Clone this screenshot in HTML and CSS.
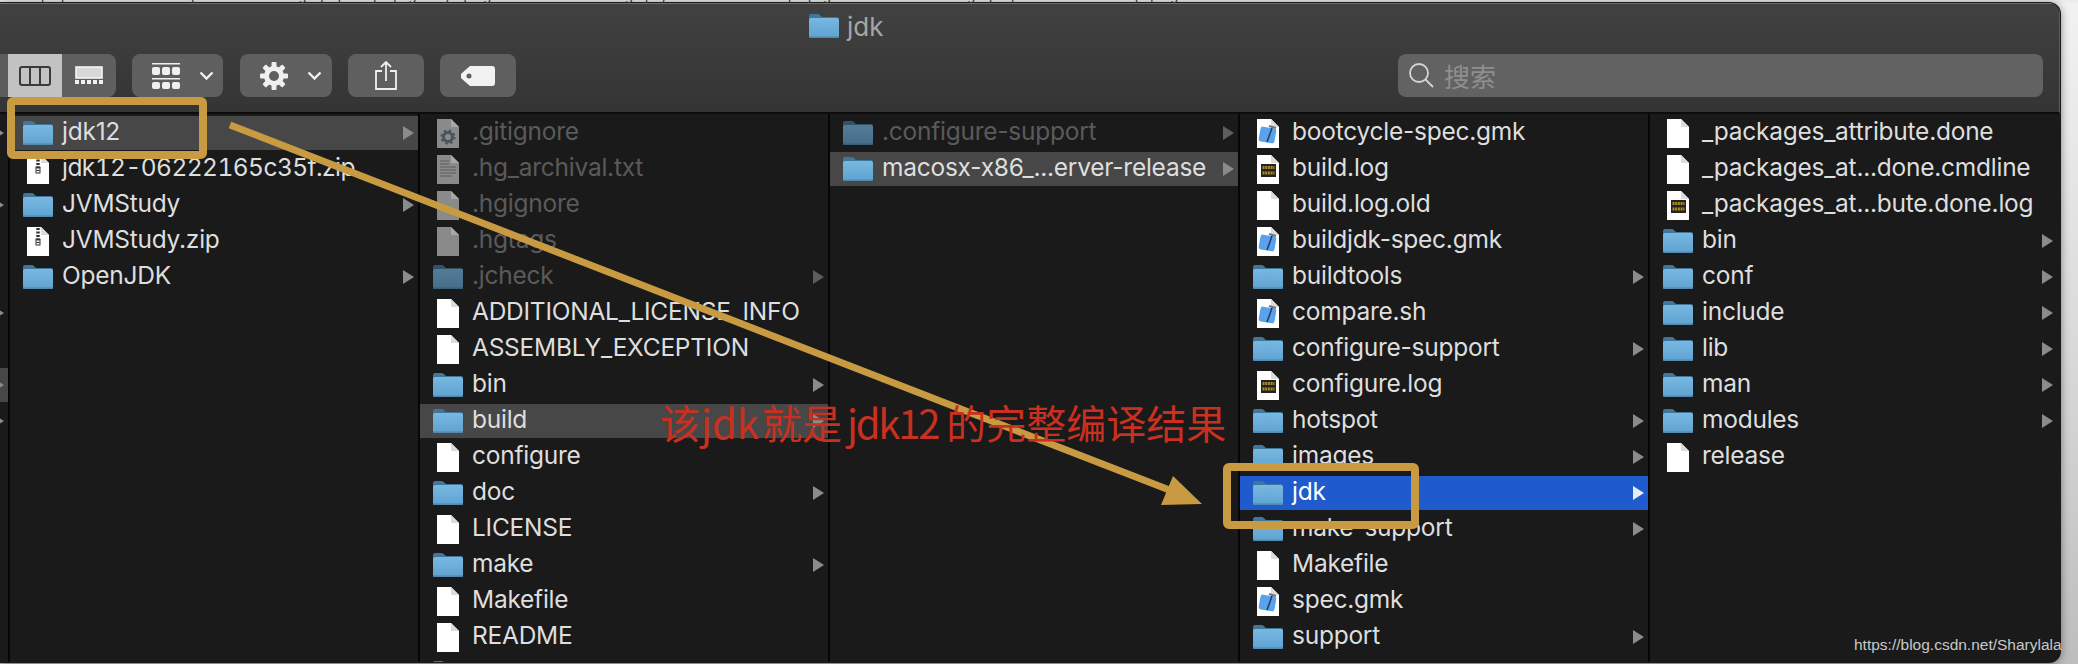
FILE: index.html
```html
<!DOCTYPE html>
<html lang="zh">
<head>
<meta charset="utf-8">
<title>jdk</title>
<link rel="stylesheet" href="styles.css">
</head>
<body>
<svg class="defs" width="0" height="0" aria-hidden="true">
  <defs>
    <linearGradient id="fg" x1="0" y1="0" x2="0" y2="1"><stop offset="0" stop-color="#78b8e2"/><stop offset="1" stop-color="#5fa2d0"/></linearGradient>
    <symbol id="folder" viewBox="0 0 30 24">
      <path d="M0 2a2 2 0 0 1 2-2h7a2 2 0 0 1 1.500.7L13 3h15a2 2 0 0 1 2 2v6H0z" fill="#3f7699"/>
      <path d="M0 6a2 2 0 0 1 2-2h26a2 2 0 0 1 2 2v16a2 2 0 0 1-2 2H2a2 2 0 0 1-2-2z" fill="url(#fg)"/>
      <path d="M0 22.500h30v.5a1 1 0 0 1-1 1H1a1 1 0 0 1-1-1z" fill="#4d89b2"/>
    </symbol>
    <symbol id="file" viewBox="0 0 22 29">
      <path d="M0 0h14l8 8v21H0z" fill="#fff"/>
      <path d="M14 0l8 8h-8z" fill="#dcdcdc"/>
    </symbol>
    <symbol id="zip" viewBox="0 0 22 29">
      <path d="M0 0h14l8 8v21H0z" fill="#fff"/>
      <path d="M14 0l8 8h-8z" fill="#dcdcdc"/>
      <path d="M11 1v15" stroke="#333" stroke-width="3.500" stroke-dasharray="2 1.500"/>
      <rect x="9" y="12" width="4" height="6" fill="none" stroke="#333"/>
    </symbol>
    <symbol id="filedim" viewBox="0 0 22 29">
      <path d="M0 0h14l8 8v21H0z" fill="#8a8a8a"/>
      <path d="M14 0l8 8h-8z" fill="#a8a8a8"/>
    </symbol>
    <symbol id="gearfile" viewBox="0 0 22 29">
      <path d="M0 0h14l8 8v21H0z" fill="#8a8a8a"/>
      <path d="M14 0l8 8h-8z" fill="#a8a8a8"/>
      <circle cx="11" cy="18" r="4.500" fill="none" stroke="#48565c" stroke-width="3"/>
      <circle cx="11" cy="18" r="6.500" fill="none" stroke="#48565c" stroke-width="2" stroke-dasharray="2.500 2.600"/>
    </symbol>
    <symbol id="txtfile" viewBox="0 0 22 29">
      <path d="M0 0h14l8 8v21H0z" fill="#8a8a8a"/>
      <path d="M14 0l8 8h-8z" fill="#a8a8a8"/>
      <path d="M3 6h9M3 9h9M3 12h16M3 15h16M3 18h16M3 21h12" stroke="#5c5c5c" stroke-width="1.200"/>
    </symbol>
    <symbol id="xcode" viewBox="0 0 22 29">
      <path d="M0 0h14l8 8v21H0z" fill="#fff"/>
      <path d="M14 0l8 8h-8z" fill="#dcdcdc"/>
      <rect x="2.500" y="8.500" width="16" height="15" rx="2.500" fill="#58a2ee" transform="rotate(10 10.500 16)"/>
      <path d="M10 23l5-14" stroke="#2a3a58" stroke-width="1.500"/>
      <path d="M12 7l7 2" stroke="#6a7688" stroke-width="2.200"/>
    </symbol>
    <symbol id="log" viewBox="0 0 22 29">
      <path d="M0 0h14l8 8v21H0z" fill="#fff"/>
      <path d="M14 0l8 8h-8z" fill="#dcdcdc"/>
      <rect x="4" y="9" width="15" height="13" fill="#26241c"/>
      <path d="M5.500 12.500h12M5.500 18h12" stroke="#a88a28" stroke-width="3" stroke-dasharray="2 .7"/>
    </symbol>
  </defs>
</svg>

<div class="strip"><span class="strip-text">Approved jdk12 gyp jqg ypg Build gjy Java pjg Tools gyq 2019 jpg</span></div>

<main class="window">
  <header class="chrome">
    <div class="title">
      <svg class="ic-folder"><use href="#folder"/></svg>
      <span>jdk</span>
    </div>
    <div class="toolbar">
      <div class="btn seg">
        <span class="seg-stub"></span>
        <span class="seg-on">
          <svg class="ic-cols" viewBox="0 0 32 20"><rect x="1" y="1" width="30" height="18" rx="2"/><path d="M11 1v18M21 1v18"/></svg>
        </span>
        <span class="seg-off">
          <svg class="ic-gallery" viewBox="0 0 28 20"><rect x="1" y="1" width="26" height="11" fill="#d8d8d8" stroke="#f4f4f4" stroke-width="1.600"/><path d="M0 14h4v4H0zM6 14h4v4H6zM12 14h4v4h-4zM18 14h4v4h-4zM24 14h4v4h-4z" fill="#f0f0f0"/></svg>
        </span>
      </div>
      <div class="btn menu">
        <svg class="ic-grid" viewBox="0 0 28 26"><path d="M0 0h28v1.500H0zM0 15h28v1.500H0z" fill="#f0f0f0"/><g fill="#f0f0f0"><rect y="4" width="8" height="8" rx="2"/><rect x="10" y="4" width="8" height="8" rx="2"/><rect x="20" y="4" width="8" height="8" rx="2"/><rect y="19" width="8" height="7" rx="2"/><rect x="10" y="19" width="8" height="7" rx="2"/><rect x="20" y="19" width="8" height="7" rx="2"/></g></svg>
        <svg class="ic-chev" viewBox="0 0 15 9"><path d="M1.500 1.500l6 6 6-6"/></svg>
      </div>
      <div class="btn menu menu-wide">
        <svg class="ic-gear" viewBox="0 0 28 28"><circle cx="14" cy="14" r="7.500" fill="none" stroke="#f0f0f0" stroke-width="5"/><g fill="#f0f0f0"><rect x="11.500" y="0" width="5" height="6" rx="1"/><rect x="11.500" y="22" width="5" height="6" rx="1"/><rect x="11.500" y="0" width="5" height="6" rx="1" transform="rotate(45 14 14)"/><rect x="11.500" y="22" width="5" height="6" rx="1" transform="rotate(45 14 14)"/><rect x="11.500" y="0" width="5" height="6" rx="1" transform="rotate(90 14 14)"/><rect x="11.500" y="22" width="5" height="6" rx="1" transform="rotate(90 14 14)"/><rect x="11.500" y="0" width="5" height="6" rx="1" transform="rotate(135 14 14)"/><rect x="11.500" y="22" width="5" height="6" rx="1" transform="rotate(135 14 14)"/></g></svg>
        <svg class="ic-chev" viewBox="0 0 15 9"><path d="M1.500 1.500l6 6 6-6"/></svg>
      </div>
      <div class="btn icon-btn">
        <svg class="ic-share" viewBox="0 0 22 29"><path d="M7 10H1v18h20V10h-6M11 20V1M6 6l5-5 5 5"/></svg>
      </div>
      <div class="btn icon-btn">
        <svg class="ic-tag" viewBox="0 0 34 20"><path fill-rule="evenodd" d="M9 0h22a3 3 0 0 1 3 3v14a3 3 0 0 1-3 3H9L1 13a4 4 0 0 1 0-6zM8 7.500a2.500 2.500 0 1 0 0 5 2.500 2.500 0 0 0 0-5z" fill="#f2f2f2"/></svg>
      </div>
      <div class="search">
        <svg class="ic-search" viewBox="0 0 25 25"><circle cx="10" cy="10" r="9"/><path d="M16.500 16.500l7.500 7.500"/></svg>
        <span>搜索</span>
      </div>
    </div>
  </header>

  <div class="browser">
    <section class="col col-stub">
      <div class="row dir"></div>
      <div class="row"></div>
      <div class="row dir"></div>
      <div class="row"></div>
      <div class="row"></div>
      <div class="row dir"></div>
      <div class="row"></div>
      <div class="row dir hl"></div>
      <div class="row dir"></div>
    </section>

    <section class="col">
      <div class="row dir hl"><svg class="ic-folder"><use href="#folder"/></svg><span class="name">jdk12</span></div>
      <div class="row"><svg class="ic-file"><use href="#zip"/></svg><span class="name name-num">jdk12-06222165c35f.zip</span></div>
      <div class="row dir"><svg class="ic-folder"><use href="#folder"/></svg><span class="name">JVMStudy</span></div>
      <div class="row"><svg class="ic-file"><use href="#zip"/></svg><span class="name">JVMStudy.zip</span></div>
      <div class="row dir"><svg class="ic-folder"><use href="#folder"/></svg><span class="name">OpenJDK</span></div>
    </section>

    <section class="col">
      <div class="row dim"><svg class="ic-file"><use href="#gearfile"/></svg><span class="name">.gitignore</span></div>
      <div class="row dim"><svg class="ic-file"><use href="#txtfile"/></svg><span class="name">.hg_archival.txt</span></div>
      <div class="row dim"><svg class="ic-file"><use href="#filedim"/></svg><span class="name">.hgignore</span></div>
      <div class="row dim"><svg class="ic-file"><use href="#filedim"/></svg><span class="name">.hgtags</span></div>
      <div class="row dim dir"><svg class="ic-folder"><use href="#folder"/></svg><span class="name">.jcheck</span></div>
      <div class="row"><svg class="ic-file"><use href="#file"/></svg><span class="name">ADDITIONAL_LICENSE_INFO</span></div>
      <div class="row"><svg class="ic-file"><use href="#file"/></svg><span class="name">ASSEMBLY_EXCEPTION</span></div>
      <div class="row dir"><svg class="ic-folder"><use href="#folder"/></svg><span class="name">bin</span></div>
      <div class="row dir hl"><svg class="ic-folder"><use href="#folder"/></svg><span class="name">build</span></div>
      <div class="row"><svg class="ic-file"><use href="#file"/></svg><span class="name">configure</span></div>
      <div class="row dir"><svg class="ic-folder"><use href="#folder"/></svg><span class="name">doc</span></div>
      <div class="row"><svg class="ic-file"><use href="#file"/></svg><span class="name">LICENSE</span></div>
      <div class="row dir"><svg class="ic-folder"><use href="#folder"/></svg><span class="name">make</span></div>
      <div class="row"><svg class="ic-file"><use href="#file"/></svg><span class="name">Makefile</span></div>
      <div class="row"><svg class="ic-file"><use href="#file"/></svg><span class="name">README</span></div>
      <div class="row dir"><svg class="ic-folder"><use href="#folder"/></svg><span class="name">src</span></div>
    </section>

    <section class="col">
      <div class="row dim dir"><svg class="ic-folder"><use href="#folder"/></svg><span class="name">.configure-support</span></div>
      <div class="row dir hl"><svg class="ic-folder"><use href="#folder"/></svg><span class="name">macosx-x86_...erver-release</span></div>
    </section>

    <section class="col">
      <div class="row"><svg class="ic-file"><use href="#xcode"/></svg><span class="name">bootcycle-spec.gmk</span></div>
      <div class="row"><svg class="ic-file"><use href="#log"/></svg><span class="name">build.log</span></div>
      <div class="row"><svg class="ic-file"><use href="#file"/></svg><span class="name">build.log.old</span></div>
      <div class="row"><svg class="ic-file"><use href="#xcode"/></svg><span class="name">buildjdk-spec.gmk</span></div>
      <div class="row dir"><svg class="ic-folder"><use href="#folder"/></svg><span class="name">buildtools</span></div>
      <div class="row"><svg class="ic-file"><use href="#xcode"/></svg><span class="name">compare.sh</span></div>
      <div class="row dir"><svg class="ic-folder"><use href="#folder"/></svg><span class="name">configure-support</span></div>
      <div class="row"><svg class="ic-file"><use href="#log"/></svg><span class="name">configure.log</span></div>
      <div class="row dir"><svg class="ic-folder"><use href="#folder"/></svg><span class="name">hotspot</span></div>
      <div class="row dir"><svg class="ic-folder"><use href="#folder"/></svg><span class="name">images</span></div>
      <div class="row dir sel"><svg class="ic-folder"><use href="#folder"/></svg><span class="name">jdk</span></div>
      <div class="row dir"><svg class="ic-folder"><use href="#folder"/></svg><span class="name">make-support</span></div>
      <div class="row"><svg class="ic-file"><use href="#file"/></svg><span class="name">Makefile</span></div>
      <div class="row"><svg class="ic-file"><use href="#xcode"/></svg><span class="name">spec.gmk</span></div>
      <div class="row dir"><svg class="ic-folder"><use href="#folder"/></svg><span class="name">support</span></div>
    </section>

    <section class="col col-last">
      <div class="row"><svg class="ic-file"><use href="#file"/></svg><span class="name">_packages_attribute.done</span></div>
      <div class="row"><svg class="ic-file"><use href="#file"/></svg><span class="name">_packages_at...done.cmdline</span></div>
      <div class="row"><svg class="ic-file"><use href="#log"/></svg><span class="name">_packages_at...bute.done.log</span></div>
      <div class="row dir"><svg class="ic-folder"><use href="#folder"/></svg><span class="name">bin</span></div>
      <div class="row dir"><svg class="ic-folder"><use href="#folder"/></svg><span class="name">conf</span></div>
      <div class="row dir"><svg class="ic-folder"><use href="#folder"/></svg><span class="name">include</span></div>
      <div class="row dir"><svg class="ic-folder"><use href="#folder"/></svg><span class="name">lib</span></div>
      <div class="row dir"><svg class="ic-folder"><use href="#folder"/></svg><span class="name">man</span></div>
      <div class="row dir"><svg class="ic-folder"><use href="#folder"/></svg><span class="name">modules</span></div>
      <div class="row"><svg class="ic-file"><use href="#file"/></svg><span class="name">release</span></div>
    </section>
  </div>
</main>

<svg class="marks" viewBox="0 0 2078 664" aria-hidden="true">
  <rect class="box" x="11" y="101" width="192" height="54" rx="2"/>
  <rect class="box" x="1227" y="467" width="188" height="58" rx="2"/>
  <path class="shaft" d="M230 125L1172 491"/>
  <path class="head" d="M1173 476L1202 504L1161 505Z"/>
</svg>
<p class="note">该<span class="note-l">jdk</span>就是<span class="note-r">jdk12</span>的完整编译结果</p>
<p class="mark">https://blog.csdn.net/Sharylala</p>
</body>
</html>
```

FILE: styles.css
```css
* { box-sizing: border-box; }
html, body { margin: 0; padding: 0; }
body {
  width: 2078px;
  height: 664px;
  overflow: hidden;
  position: relative;
  background: linear-gradient(#f2f2f2, #d8d8d8 55%, #bdbdbd);
  font-family: Inter, "Noto Sans", "Noto Sans CJK SC", sans-serif;
}
.defs { position: absolute; }

.strip { height: 3px; overflow: hidden; background: #ececec; }
.strip-text { display: block; margin-top: -11px; font-size: 13px; line-height: 13px; color: #333; padding-left: 20px; letter-spacing: 12px; white-space: nowrap; }

.window {
  width: 2060px;
  height: 659px;
  display: flex;
  flex-direction: column;
  border-top-right-radius: 11px;
  border-bottom-right-radius: 11px;
  overflow: hidden;
  background: #1a1a1a;
  box-shadow: 0 0 0 1px #1a1a1a, 0 1px 10px rgba(0, 0, 0, .55);
}

.chrome {
  height: 111px;
  flex: none;
  display: flex;
  flex-direction: column;
  background: linear-gradient(#414141, #343434);
  border-top: 1px solid #6e6e6e;
  border-bottom: 2px solid #0c0c0c;
  border-right: 1px solid #5c5c5c;
}
.title {
  height: 50px;
  flex: none;
  display: flex;
  align-items: center;
  gap: 8px;
  padding: 0 0 6px 809px;
  color: #a6a6a6;
  font-size: 26px;
}
.toolbar { height: 43px; display: flex; gap: 16px; align-items: stretch; padding-right: 16px; }
.btn { background: #5f5f5f; border-radius: 8px; display: flex; align-items: center; }
.seg { width: 116px; overflow: hidden; border-radius: 0 8px 8px 0; align-items: stretch; }
.seg-stub { width: 8px; background: #5c5c5c; }
.seg-on { width: 54px; background: #c2c2c2; display: flex; align-items: center; justify-content: center; }
.seg-off { flex: 1; display: flex; align-items: center; justify-content: center; }
.ic-cols { width: 32px; height: 20px; fill: none; stroke: #3a3a3a; stroke-width: 2; }
.ic-gallery { width: 28px; height: 20px; }
.menu { width: 91px; padding-left: 20px; gap: 19px; }
.menu-wide { width: 92px; margin-left: 1px; }
.ic-grid { width: 28px; height: 26px; }
.ic-gear { width: 28px; height: 28px; }
.ic-chev { width: 15px; height: 9px; fill: none; stroke: #f0f0f0; stroke-width: 2.4; }
.icon-btn { width: 76px; justify-content: center; }
.ic-share { width: 22px; height: 29px; fill: none; stroke: #f0f0f0; stroke-width: 1.8; }
.ic-tag { width: 34px; height: 20px; }
.search {
  margin-left: auto;
  width: 645px;
  background: #626262;
  border-radius: 8px;
  display: flex;
  align-items: center;
  padding-left: 11px;
  gap: 10px;
  color: #8f8f8f;
  font-family: "Noto Sans CJK SC", sans-serif;
  font-size: 26px;
}
.ic-search { width: 25px; height: 25px; fill: none; stroke: #d4d4d4; stroke-width: 1.8; }

.browser { flex: 1; min-height: 0; display: flex; align-items: stretch; overflow: hidden; }
.col { width: 410px; flex: none; padding-top: 2px; border-right: 2px solid #060606; overflow: hidden; }
.col-stub { width: 10px; }
.col-last { flex: 1; border-right: 0; padding-right: 3px; }

.row {
  height: 34px;
  margin-bottom: 2px;
  display: flex;
  align-items: center;
  position: relative;
  color: #dedede;
  font-size: 24.5px;
  letter-spacing: -.25px;
  white-space: nowrap;
}
.name { padding-bottom: 4px; }
.name-num { font-variant-numeric: tabular-nums; letter-spacing: -.55px; }
.row.dir::after {
  content: "";
  position: absolute;
  right: 4px;
  top: 10px;
  border-left: 11px solid #8b8b8b;
  border-top: 7px solid transparent;
  border-bottom: 7px solid transparent;
}
.hl { background: #474747; }
.sel { background: #1f5bcd; color: #fff; }
.sel.dir::after { border-left-color: #e6ecfa; }
.dim { color: #5a5a5a; }
.dim.dir::after { border-left-color: #5e5e5e; }
.dim .ic-folder { opacity: .62; }
.ic-folder { width: 30px; height: 24px; flex: none; }
.row .ic-folder { margin: 0 9px 0 13px; }
.ic-file { width: 22px; height: 29px; flex: none; margin: 0 13px 0 17px; }

.marks { position: absolute; left: 0; top: 0; width: 2078px; height: 664px; pointer-events: none; }
.box { fill: none; stroke: #c89a42; stroke-width: 8; }
.shaft { stroke: #c89a42; stroke-width: 7; fill: none; }
.head { fill: #c89a42; }
.note {
  position: absolute;
  left: 660px;
  top: 393px;
  margin: 0;
  font-family: "Noto Sans CJK SC", sans-serif;
  font-weight: 400;
  font-size: 40px;
  line-height: 58px;
  color: #c9301f;
  white-space: nowrap;
}
.note-l { margin: 0 3px 0 1px; }
.note-r { margin: 0 8px 0 5px; letter-spacing: -2.2px; }
.mark {
  position: absolute;
  left: 1854px;
  top: 636px;
  margin: 0;
  font-family: "Liberation Sans", sans-serif;
  font-size: 15.5px;
  line-height: 18px;
  color: #c8c8c8;
  white-space: nowrap;
}
```
